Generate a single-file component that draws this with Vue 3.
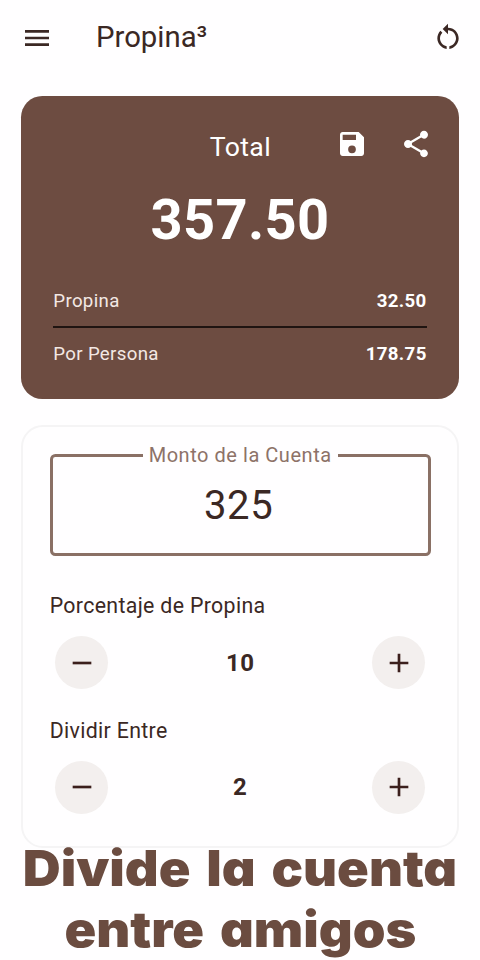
<script setup>
import { ref, computed } from 'vue'

const bill = ref(325)
const percent = ref(10)
const people = ref(2)

const tip = computed(() => (bill.value * percent.value) / 100)
const total = computed(() => bill.value + tip.value)
const perPerson = computed(() => total.value / people.value)
const money = (n) => n.toFixed(2)

function reset() {
  bill.value = 325
  percent.value = 10
  people.value = 2
}
</script>

<template>
  <main class="screen">
    <header class="bar">
      <svg class="icon" viewBox="0 0 24 24"><path d="M3 18h18v-2H3v2zm0-5h18v-2H3v2zm0-7v2h18V6H3z" /></svg>
      <h1 class="title">Propina³</h1>
      <svg class="icon" viewBox="0 0 24 24" @click="reset"><path d="M12 5V2L8 6l4 4V7c3.31 0 6 2.69 6 6 0 2.97-2.17 5.43-5 5.91v2.02c3.95-.49 7-3.85 7-7.93 0-4.42-3.58-8-8-8zm-6 8c0-1.65.67-3.15 1.76-4.24L6.34 7.34C4.9 8.79 4 10.79 4 13c0 4.08 3.05 7.44 7 7.93v-2.02c-2.83-.48-5-2.94-5-5.91z" /></svg>
    </header>

    <section class="summary">
      <div class="summary-head">
        <span class="total-label">Total</span>
        <svg class="icon save" viewBox="0 0 24 24"><path d="M17 3H5c-1.11 0-2 .9-2 2v14c0 1.1.89 2 2 2h14c1.1 0 2-.9 2-2V7l-4-4zm-2 6H5V5h10v4zm-3 4.1a2.9 2.9 0 1 1 0 5.8 2.9 2.9 0 0 1 0-5.8z" fill-rule="evenodd" /></svg>
        <svg class="icon share" viewBox="0 0 24 24"><path d="M18 16.08c-.76 0-1.44.3-1.96.77L8.91 12.7c.05-.23.09-.46.09-.7s-.04-.47-.09-.7l7.05-4.11c.54.5 1.25.81 2.04.81 1.66 0 3-1.34 3-3s-1.34-3-3-3-3 1.34-3 3c0 .24.04.47.09.7L8.04 9.81C7.5 9.31 6.79 9 6 9c-1.66 0-3 1.34-3 3s1.34 3 3 3c.79 0 1.5-.31 2.04-.81l7.12 4.16c-.05.21-.08.43-.08.65 0 1.61 1.31 2.92 2.92 2.92s2.92-1.31 2.92-2.92-1.31-2.92-2.92-2.92z" /></svg>
      </div>
      <div class="total">{{ money(total) }}</div>
      <div class="row first"><span>Propina</span><b>{{ money(tip) }}</b></div>
      <div class="row"><span>Por Persona</span><b>{{ money(perPerson) }}</b></div>
    </section>

    <section class="form">
      <fieldset class="field">
        <legend>Monto de la Cuenta</legend>
        <div class="amount">{{ bill }}</div>
      </fieldset>

      <h2 class="label">Porcentaje de Propina</h2>
      <div class="stepper">
        <button class="round" @click="percent--"><svg class="icon" viewBox="0 0 24 24"><path d="M19 13H5v-2h14v2z" /></svg></button>
        <b class="value">{{ percent }}</b>
        <button class="round" @click="percent++"><svg class="icon" viewBox="0 0 24 24"><path d="M19 13h-6v6h-2v-6H5v-2h6V5h2v6h6v2z" /></svg></button>
      </div>

      <h2 class="label second">Dividir Entre</h2>
      <div class="stepper">
        <button class="round" @click="people = Math.max(1, people - 1)"><svg class="icon" viewBox="0 0 24 24"><path d="M19 13H5v-2h14v2z" /></svg></button>
        <b class="value">{{ people }}</b>
        <button class="round" @click="people++"><svg class="icon" viewBox="0 0 24 24"><path d="M19 13h-6v6h-2v-6H5v-2h6V5h2v6h6v2z" /></svg></button>
      </div>
    </section>

    <p class="slogan"><span class="line">Divide la cuenta</span><span class="line">entre amigos</span></p>
  </main>
</template>

<style>
body {
  background: #fffeff;
}
</style>

<style scoped>
.screen {
  height: 960px;
  overflow: hidden;
  box-sizing: border-box;
  padding: 0 21.33px;
  background: #fffeff;
  color: #3b2824;
  font-family: Roboto, "Liberation Sans", sans-serif;
}
.icon {
  display: block;
  width: 32px;
  height: 32px;
  fill: currentColor;
  flex: none;
}
.bar {
  display: flex;
  align-items: center;
  height: 75px;
}
.bar .icon:last-child {
  margin: -1px -5.33px 0 0;
}
.title {
  flex: 1;
  margin: -2px 0 0 42.67px;
  font-size: 29.33px;
  line-height: 36px;
  font-weight: 400;
}
.summary {
  margin-top: 21px;
  height: 303px;
  box-sizing: border-box;
  padding: 32px 32px 0;
  border-radius: 21.33px;
  background: #6d4c41;
  color: #fff;
}
.summary-head {
  display: grid;
  grid-template-columns: 1fr 32px 32px;
  column-gap: 32px;
  height: 36px;
  margin-right: -5.33px;
}
.total-label {
  padding-left: 156.5px;
  font-size: 26.67px;
  line-height: 39px;
  letter-spacing: 0.33px;
}
.total {
  margin-top: 21px;
  text-align: center;
  font-size: 56px;
  line-height: 70px;
  font-weight: 700;
  letter-spacing: 0.33px;
}
.row {
  display: flex;
  justify-content: space-between;
  align-items: center;
  box-sizing: border-box;
  height: 51px;
  font-size: 18.67px;
  letter-spacing: 0.33px;
}
.row span {
  color: #f3e8e4;
}
.row.first {
  height: 55px;
  margin-top: 18px;
  padding-top: 2px;
  border-bottom: 2px solid #1f1411;
}
.form {
  margin-top: 26px;
  height: 423px;
  box-sizing: border-box;
  padding: 16px 26px 0 26.33px;
  border: 2px solid #f5f4f5;
  border-radius: 22px;
}
.field {
  margin: 0;
  padding: 0;
  height: 113px;
  box-sizing: border-box;
  border: 3px solid #8a7065;
  border-radius: 5.33px;
}
.field legend {
  margin: 0 auto;
  padding: 0 6px;
  font-size: 20px;
  line-height: 24px;
  letter-spacing: 0.54px;
  color: #8d7268;
}
.amount {
  text-align: center;
  font-size: 40px;
  line-height: 52px;
  margin: 13px 3px 0 0;
  letter-spacing: 0.67px;
}
.label {
  margin: 36px 0 0;
  font-size: 21.33px;
  line-height: 28px;
  font-weight: 400;
  letter-spacing: 0.33px;
}
.label.second {
  margin-top: 27.5px;
}
.stepper {
  display: flex;
  align-items: center;
  justify-content: space-between;
  margin: 16px 5.33px 0;
}
.round {
  display: flex;
  align-items: center;
  justify-content: center;
  width: 53.33px;
  height: 53.33px;
  padding: 0;
  border: 0;
  border-radius: 50%;
  background: #f3efee;
  color: #3b1f1c;
}
.value {
  font-size: 24px;
  letter-spacing: 0.33px;
}
.slogan {
  display: flex;
  flex-direction: column;
  align-items: center;
  margin: -10px -20px 0;
  color: #6b4c40;
  font-family: Inter, "Open Sans", sans-serif;
  font-size: 49px;
  line-height: 61px;
  font-weight: 900;
  font-feature-settings: "cv11" 1;
  white-space: nowrap;
  word-spacing: 5px;
}
.line {
  display: block;
  transform: scaleX(1.07);
}
</style>
